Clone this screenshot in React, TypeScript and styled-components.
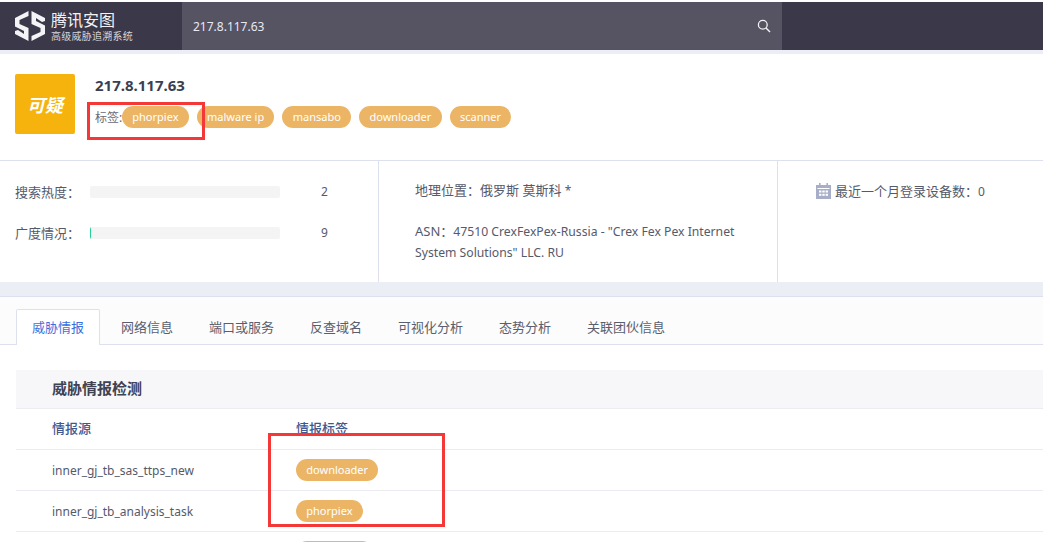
import React from "react";
import styled, { createGlobalStyle } from "styled-components";

const Global = createGlobalStyle`
  html, body { margin: 0; padding: 0; background: #fff; }
  body { font-family: "Noto Sans", "Noto Sans CJK SC", sans-serif; font-size: 13px; color: #555a6b; }
  * { box-sizing: border-box; }
`;

const Page = styled.div`
  position: relative;
  width: 1043px;
  height: 542px;
  overflow: hidden;
  padding-top: 2px;
  background: #fff;
`;

const Latin = styled.span`
  font-size: 12px;
`;
const AsnLabel = styled.span`
  font-size: 13px;
`;

const Header = styled.header`
  display: flex;
  height: 48px;
  background: #3b3849;
`;
const Brand = styled.div`
  width: 182px;
  display: flex;
  align-items: center;
  padding-left: 15px;
  gap: 6px;
  color: #fff;
`;
const BrandText = styled.div`
  display: flex;
  flex-direction: column;
`;
const BrandName = styled.span`
  font-size: 16px;
  line-height: 20px;
  color: #f2f2f4;
`;
const BrandSub = styled.span`
  font-size: 10px;
  line-height: 13px;
  letter-spacing: 0.25px;
  color: #d6d5db;
`;
const Search = styled.div`
  width: 600px;
  display: flex;
  align-items: center;
  justify-content: space-between;
  padding: 0 11px;
  background: #565362;
  color: #e6eaf2;
  font-size: 12px;
`;
const Band = styled.div<{ $h: number }>`
  height: ${(p) => p.$h}px;
  background: #ebeef5;
`;

const Summary = styled.section`
  display: flex;
  height: 107px;
  padding: 20px 15px;
  gap: 20px;
  border-bottom: 1px solid #dde1ee;
`;
const Verdict = styled.div`
  width: 60px;
  height: 60px;
  display: flex;
  align-items: center;
  justify-content: center;
  background: #f6b30e;
  border-radius: 2px;
  color: #fff;
  font-size: 18px;
  font-weight: 700;
  font-style: italic;
`;
const SummaryBody = styled.div`
  display: flex;
  flex-direction: column;
  gap: 10px;
`;
const Ip = styled.div`
  font-size: 15px;
  line-height: 22px;
  font-weight: 700;
  color: #3a3f51;
`;
const TagRow = styled.div`
  display: flex;
  align-items: center;
  height: 22px;
`;
const TagLabel = styled.span`
  width: 27px;
  font-size: 12px;
  color: #666a78;
  white-space: nowrap;
`;
const Tags = styled.div`
  display: flex;
  gap: 8px;
`;
const Tag = styled.span`
  display: inline-block;
  height: 22px;
  line-height: 22px;
  padding: 0 10.3px;
  border-radius: 11px;
  background: #ebb565;
  color: #fff;
  font-size: 11px;
  white-space: nowrap;
`;
const TagStub = styled(Tag)`
  width: 77px;
`;

const Stats = styled.section`
  display: flex;
  height: 121px;
`;
const StatCol = styled.div<{ $w: number; $divider?: boolean }>`
  width: ${(p) => p.$w}px;
  flex: none;
  border-right: ${(p) => (p.$divider ? "1px solid #dde1ee" : "none")};
`;
const HeatCol = styled(StatCol)`
  padding: 20px 15px 0;
  display: flex;
  flex-direction: column;
  gap: 20px;
`;
const HeatRow = styled.div`
  display: flex;
  align-items: center;
  height: 21px;
`;
const HeatLabel = styled.span`
  width: 75px;
  white-space: nowrap;
`;
const HeatTrack = styled.div`
  width: 190px;
  height: 12px;
  background: #f4f4f4;
  border-radius: 2px;
  overflow: hidden;
`;
const HeatFill = styled.div`
  height: 100%;
  background: #27cf9b;
`;
const HeatValue = styled.span`
  margin-left: 41px;
  font-size: 12px;
`;
const GeoCol = styled(StatCol)`
  padding: 19px 36px 0;
  line-height: 21px;
`;
const GeoAsn = styled.p`
  margin: 20px 0 0;
  font-size: 12.2px;
`;
const DeviceCol = styled(StatCol)`
  padding: 19px 38px 0;
`;
const DeviceLine = styled.div`
  display: flex;
  align-items: center;
  gap: 4px;
  height: 21px;
  white-space: nowrap;
`;

const TabsBar = styled.nav`
  display: flex;
  align-items: flex-end;
  height: 49px;
  padding-left: 16px;
  background: #fcfcfc;
  border-top: 1px solid #dde1ee;
  border-bottom: 1px solid #dde1ee;
`;
const TabItem = styled.div<{ $active?: boolean }>`
  height: ${(p) => (p.$active ? "36px" : "35px")};
  line-height: 34px;
  padding: 0 ${(p) => (p.$active ? "15px" : "18px")};
  margin-bottom: -1px;
  white-space: nowrap;
  color: ${(p) => (p.$active ? "#3a6fe0" : "#5a5e6e")};
  background: ${(p) => (p.$active ? "#fff" : "transparent")};
  border: ${(p) => (p.$active ? "1px solid #dde1ee" : "none")};
  border-bottom: none;
  border-radius: 2px 2px 0 0;
  margin-right: ${(p) => (p.$active ? "3px" : "0")};
`;

const Panel = styled.section`
  padding: 25px 0 0 16px;
`;
const PanelTitle = styled.h3`
  margin: 0;
  height: 39px;
  padding-left: 36px;
  line-height: 37px;
  font-size: 15px;
  font-weight: 700;
  color: #3f4252;
  background: #f7f7f9;
  border-bottom: 1px solid #ebebf2;
`;
const Row = styled.div<{ $head?: boolean }>`
  display: flex;
  align-items: center;
  height: 41px;
  padding-left: 36px;
  padding-bottom: ${(p) => (p.$head ? "3px" : "0")};
  border-bottom: 1px solid #ebebf2;
  color: ${(p) => (p.$head ? "#40588f" : "#555a6b")};
  font-weight: ${(p) => (p.$head ? 500 : 400)};
`;
const SourceCell = styled.div`
  width: 244px;
  font-size: 12px;
`;
const HeadCell = styled.div`
  width: 244px;
`;

const Annotation = styled.div<{ $x: number; $y: number; $w: number; $h: number }>`
  position: absolute;
  left: ${(p) => p.$x}px;
  top: ${(p) => p.$y}px;
  width: ${(p) => p.$w}px;
  height: ${(p) => p.$h}px;
  border: 3px solid #f43838;
  pointer-events: none;
`;

const Logo = () => (
  <svg width="30" height="30" viewBox="0 0 30 30" fill="#f4f4f6">
    <polygon points="13.5,0 13.5,5 4.5,9 4.5,13 13.5,17 13.5,30 0,23 0,20 3,19 9,23 9,20 0,15.5 0,7" />
    <polygon points="16.5,0 30,7 30,10 27,11 21,7 21,10 30,14.5 30,23 16.5,30 16.5,25 25.5,21 25.5,17 16.5,13" />
  </svg>
);

const SearchIcon = () => (
  <svg width="14" height="14" viewBox="0 0 14 14" fill="none" stroke="#f2f2f4">
    <circle cx="5.8" cy="5.8" r="4.4" strokeWidth="1.3" />
    <line x1="9" y1="9" x2="13" y2="13" strokeWidth="1.4" />
  </svg>
);

const CalendarIcon = () => (
  <svg width="15" height="16" viewBox="0 0 15 16" fill="#a8aec9">
    <path d="M3 0h1.6v2h5.8V0H12v2h3v14H0V2h3z" />
    <g fill="#fff">
      <rect x="1.5" y="5" width="12" height="1" />
      <rect x="3" y="7.5" width="2.4" height="2" />
      <rect x="6.3" y="7.5" width="2.4" height="2" />
      <rect x="9.6" y="7.5" width="2.4" height="2" />
      <rect x="3" y="10.8" width="2.4" height="2" />
      <rect x="6.3" y="10.8" width="2.4" height="2" />
      <rect x="9.6" y="10.8" width="2.4" height="2" />
    </g>
  </svg>
);

const tabs = ["网络信息", "端口或服务", "反查域名", "可视化分析", "态势分析", "关联团伙信息"];
const summaryTags = ["phorpiex", "malware ip", "mansabo", "downloader", "scanner"];
const rows = [
  ["inner_gj_tb_sas_ttps_new", "downloader"],
  ["inner_gj_tb_analysis_task", "phorpiex"],
];

export default function App() {
  return (
    <Page>
      <Global />
      <Header>
        <Brand>
          <Logo />
          <BrandText>
            <BrandName>腾讯安图</BrandName>
            <BrandSub>高级威胁追溯系统</BrandSub>
          </BrandText>
        </Brand>
        <Search>
          <span>217.8.117.63</span>
          <SearchIcon />
        </Search>
      </Header>
      <Band $h={4} />
      <Summary>
        <Verdict>可疑</Verdict>
        <SummaryBody>
          <Ip>217.8.117.63</Ip>
          <TagRow>
            <TagLabel>标签:</TagLabel>
            <Tags>
              {summaryTags.map((t) => (
                <Tag key={t}>{t}</Tag>
              ))}
            </Tags>
          </TagRow>
        </SummaryBody>
      </Summary>
      <Stats>
        <HeatCol $w={379} $divider>
          <HeatRow>
            <HeatLabel>搜索热度：</HeatLabel>
            <HeatTrack />
            <HeatValue>2</HeatValue>
          </HeatRow>
          <HeatRow>
            <HeatLabel>广度情况：</HeatLabel>
            <HeatTrack>
              <HeatFill style={{ width: "1px" }} />
            </HeatTrack>
            <HeatValue>9</HeatValue>
          </HeatRow>
        </HeatCol>
        <GeoCol $w={399} $divider>
          <div>
            地理位置：俄罗斯 莫斯科 <Latin>*</Latin>
          </div>
          <GeoAsn>
            <AsnLabel>ASN：</AsnLabel>47510 CrexFexPex-Russia - "Crex Fex Pex Internet System Solutions" LLC. RU
          </GeoAsn>
        </GeoCol>
        <DeviceCol $w={265}>
          <DeviceLine>
            <CalendarIcon />
            <span>
              最近一个月登录设备数：<Latin>0</Latin>
            </span>
          </DeviceLine>
        </DeviceCol>
      </Stats>
      <Band $h={14} />
      <TabsBar>
        <TabItem $active>威胁情报</TabItem>
        {tabs.map((t) => (
          <TabItem key={t}>{t}</TabItem>
        ))}
      </TabsBar>
      <Panel>
        <PanelTitle>威胁情报检测</PanelTitle>
        <Row $head>
          <HeadCell>情报源</HeadCell>
          <div>情报标签</div>
        </Row>
        {rows.map(([src, tag]) => (
          <Row key={tag}>
            <SourceCell>{src}</SourceCell>
            <Tag>{tag}</Tag>
          </Row>
        ))}
        <Row>
          <SourceCell />
          <TagStub />
        </Row>
      </Panel>
      <Annotation $x={87} $y={102} $w={118} $h={38} />
      <Annotation $x={268} $y={433} $w={177} $h={94} />
    </Page>
  );
}
